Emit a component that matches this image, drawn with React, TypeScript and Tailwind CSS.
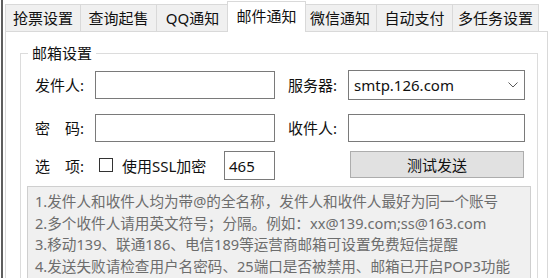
import React from "react";

const font = "font-['Noto_Sans','Noto_Sans_CJK_SC',sans-serif]";

const tabs = [
  { label: "抢票设置", w: "w-[76px]" },
  { label: "查询起售", w: "w-[76px]" },
  { label: "QQ通知", w: "w-[72px]" },
  { label: "邮件通知", w: "w-[79px]", selected: true },
  { label: "微信通知", w: "w-[73px]" },
  { label: "自动支付", w: "w-[76px]" },
  { label: "多任务设置", w: "w-[86px]" },
];

const lines = [
  "1.发件人和收件人均为带@的全名称，发件人和收件人最好为同一个账号",
  "2.多个收件人请用英文符号；分隔。例如：xx@139.com;ss@163.com",
  "3.移动139、联通186、电信189等运营商邮箱可设置免费短信提醒",
  "4.发送失败请检查用户名密码、25端口是否被禁用、邮箱已开启POP3功能",
];

export default function App() {
  return (
    <div className={`flex w-[550px] h-[278px] overflow-hidden bg-white text-[15px] text-[#111] ${font}`}>
      <div className="w-[1px] shrink-0" />
      <div className="w-[2px] shrink-0 bg-[#5e5e5e]" />
      <div className="w-[2px] shrink-0" />
      <div className="flex flex-col w-[543px] shrink-0">
        {/* tab strip */}
        <div className="flex items-end h-[31px] shrink-0">
          {tabs.map((t, i) =>
            t.selected ? (
              <div
                key={t.label}
                className={`relative z-10 -mx-[2px] -mb-[1px] h-[31px] ${t.w} flex items-center justify-center pb-[3px] bg-white border border-b-0 border-[#d9d9d9] leading-[20px] whitespace-nowrap`}
              >
                {t.label}
              </div>
            ) : (
              <div
                key={t.label}
                className={`h-[27px] ${t.w} flex items-center justify-center bg-[#f0f0f0] border-t border-r border-[#d9d9d9] ${i === 0 ? "border-l" : ""} leading-[20px] whitespace-nowrap`}
              >
                {t.label}
              </div>
            )
          )}
        </div>
        {/* panel */}
        <div className="flex-1 border border-[#d9d9d9] bg-white flex flex-col">
          <fieldset className="mt-[11px] ml-[14px] mr-[9px] border border-[#dcdcdc] flex-1 min-h-0">
            <legend className="ml-[7px] px-[4px] leading-[20px]">邮箱设置</legend>
            <div className="flex flex-col px-[6px] pt-[7px]">
              {/* row 1 */}
              <div className="flex items-center h-[30px] pl-[8px]">
                <div className="w-[60px] leading-[20px]">发件人:</div>
                <div className="w-[180px] h-[28px] border border-[#7a7a7a] bg-white" />
                <div className="ml-[13px] w-[60px] leading-[20px]">服务器:</div>
                <div className="w-[177px] h-[30px] border border-[#7a7a7a] bg-white flex items-center pl-[5px] pr-[6px]">
                  <span className="flex-1 leading-[20px]">smtp.126.com</span>
                  <svg width="10" height="6" viewBox="0 0 10 6" fill="none">
                    <path d="M0.5 0.5 L5 5 L9.5 0.5" stroke="#5a5a5a" strokeWidth="1" />
                  </svg>
                </div>
              </div>
              {/* row 2 */}
              <div className="flex items-center h-[28px] mt-[14px] pl-[8px]">
                <div className="w-[60px] leading-[20px]">密　码:</div>
                <div className="w-[180px] h-[28px] border border-[#7a7a7a] bg-white" />
                <div className="ml-[13px] w-[60px] leading-[20px]">收件人:</div>
                <div className="w-[177px] h-[28px] border border-[#7a7a7a] bg-white" />
              </div>
              {/* row 3 */}
              <div className="flex items-center h-[29px] mt-[9px] pl-[8px]">
                <div className="w-[60px] leading-[20px]">选　项:</div>
                <div className="w-[180px] flex items-center">
                  <div className="ml-[4px] w-[14px] h-[14px] border border-[#333] bg-white -mt-[2px]" />
                  <span className="ml-[9px] leading-[20px]">使用SSL加密</span>
                  <div className="ml-auto w-[51px] h-[29px] border border-[#7a7a7a] bg-white flex items-center pl-[4px] leading-[20px]">
                    465
                  </div>
                </div>
                <div className="self-start ml-[75px] w-[174px] h-[27px] bg-[#e1e1e1] border border-[#adadad] flex items-center justify-center leading-[20px]">
                  测试发送
                </div>
              </div>
              {/* info */}
              <div className="mt-[6px] h-[110px] border border-[#cfcfcf] bg-[#f0f0f0] pl-[7px] pt-[4px] text-[14.6px] text-[#6d6d6d] leading-[21.7px] whitespace-nowrap">
                {lines.map((l) => (
                  <div key={l}>{l}</div>
                ))}
              </div>
            </div>
          </fieldset>
        </div>
      </div>
    </div>
  );
}
